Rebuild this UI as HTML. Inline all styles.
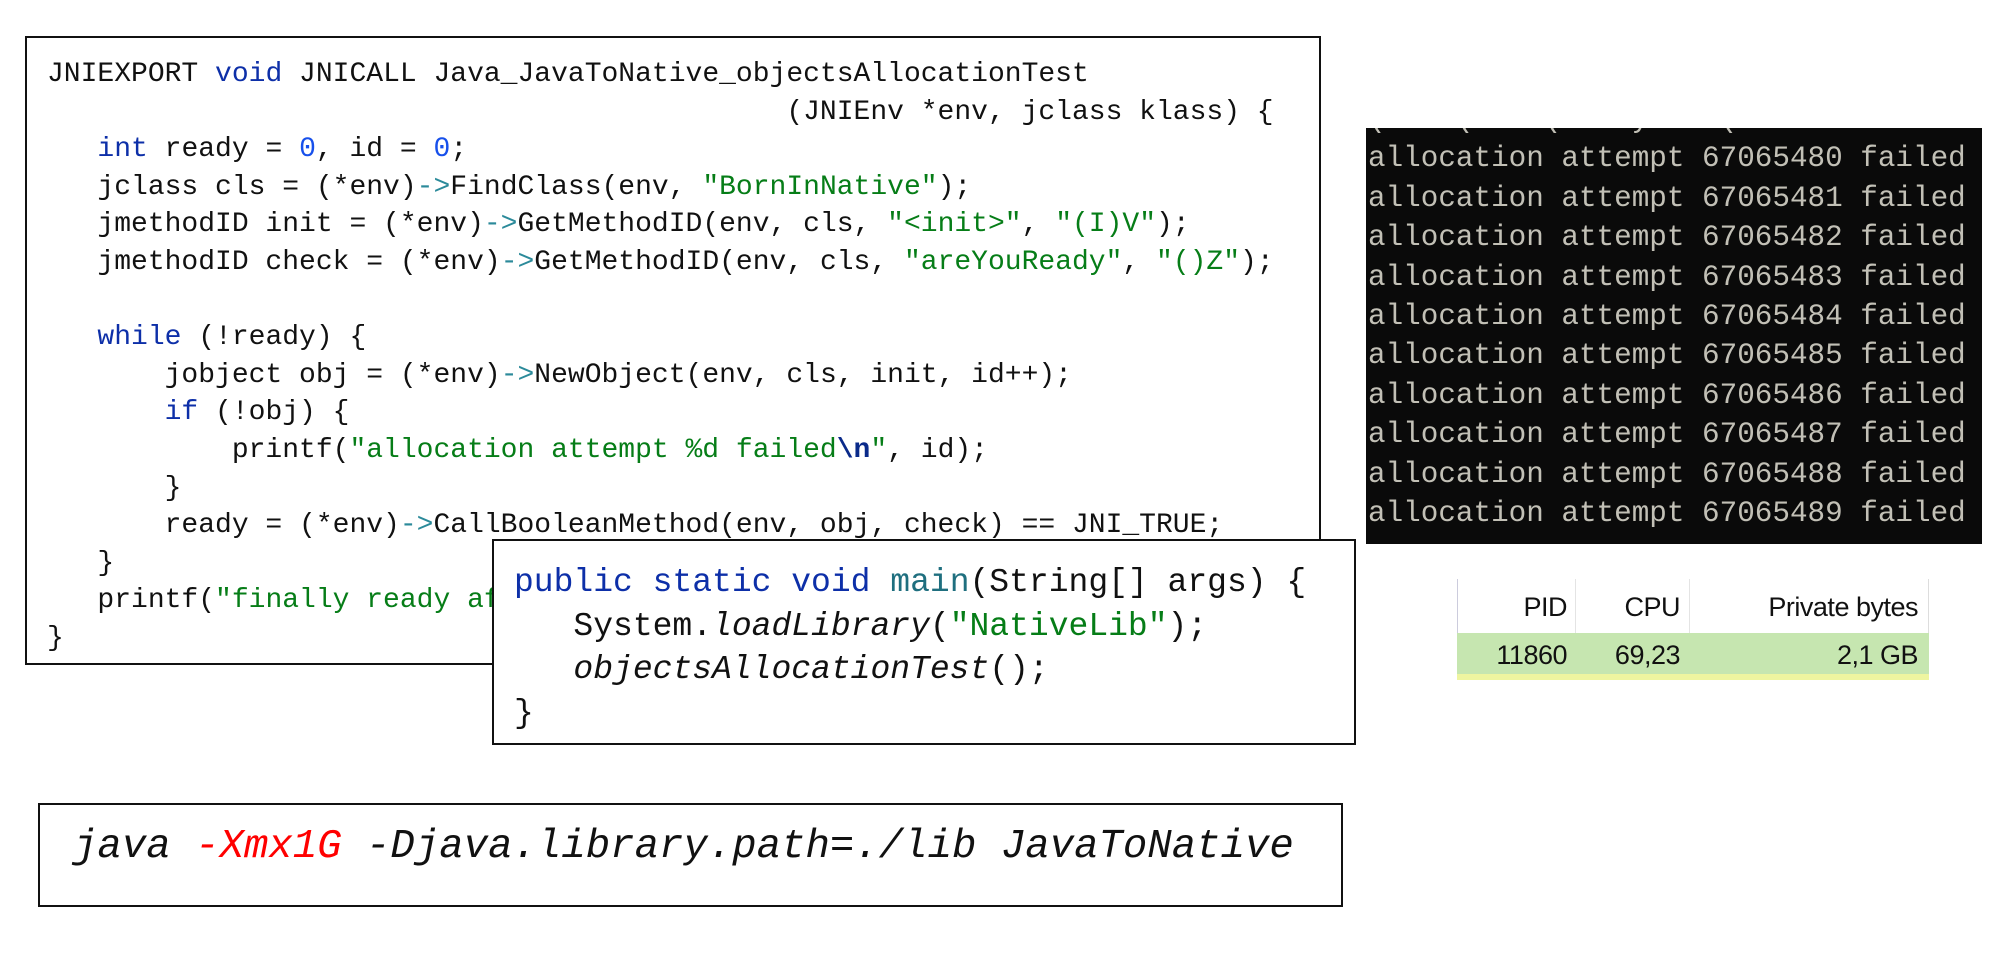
<!DOCTYPE html>
<html><head><meta charset="utf-8"><style>
body{margin:0;width:1996px;height:958px;background:#fff;position:relative;overflow:hidden}
.box{position:absolute;border:2px solid #111;background:#fff;box-sizing:border-box}
pre{margin:0;position:absolute;font-family:"Liberation Mono",monospace;color:#111;white-space:pre}
.k{color:#0d2fa8}.n{color:#1750eb}.s{color:#067d17}.a{color:#2b8a9a}.m{color:#1f6f7f}.b{color:#0a2a8a;font-weight:bold}
i{font-style:italic}
.th{position:absolute;font-family:"Liberation Sans",sans-serif;font-size:27px;color:#111;text-align:right;letter-spacing:-0.5px}
</style></head><body>
<div class="box" style="left:25px;top:36px;width:1296px;height:629px"></div>
<pre style="left:47px;top:56px;font-size:28px;line-height:37.6px">JNIEXPORT <span class="k">void</span> JNICALL Java_JavaToNative_objectsAllocationTest
                                            (JNIEnv *env, jclass klass) {
   <span class="k">int</span> ready = <span class="n">0</span>, id = <span class="n">0</span>;
   jclass cls = (*env)<span class="a">-&gt;</span>FindClass(env, <span class="s">"BornInNative"</span>);
   jmethodID init = (*env)<span class="a">-&gt;</span>GetMethodID(env, cls, <span class="s">"&lt;init&gt;"</span>, <span class="s">"(I)V"</span>);
   jmethodID check = (*env)<span class="a">-&gt;</span>GetMethodID(env, cls, <span class="s">"areYouReady"</span>, <span class="s">"()Z"</span>);

   <span class="k">while</span> (!ready) {
       jobject obj = (*env)<span class="a">-&gt;</span>NewObject(env, cls, init, id++);
       <span class="k">if</span> (!obj) {
           printf(<span class="s">"allocation attempt %d failed<span class="b">\n</span>"</span>, id);
       }
       ready = (*env)<span class="a">-&gt;</span>CallBooleanMethod(env, obj, check) == JNI_TRUE;
   }
   printf(<span class="s">"finally ready after %d attempts"</span>, id);
}</pre>
<div class="box" style="left:492px;top:539px;width:864px;height:206px"></div>
<pre style="left:514px;top:561px;font-size:33px;line-height:43.7px"><span class="k">public static void</span> <span class="m">main</span>(String[] args) {
   System.<i>loadLibrary</i>(<span class="s">"NativeLib"</span>);
   <i>objectsAllocationTest</i>();
}</pre>
<div class="box" style="left:38px;top:803px;width:1305px;height:104px"></div>
<pre style="left:73px;top:824px;font-size:40.7px;line-height:46px"><i>java <span style="color:#f00">-Xmx1G</span> -Djava.library.path=./lib JavaToNative</i></pre>
<div style="position:absolute;left:1366px;top:128px;width:616px;height:416px;background:#0a0a0a;overflow:hidden">
<pre style="left:2px;top:-28px;font-size:29.3px;line-height:39.4px;color:#c2c0b6">(    (    (    y    (
allocation attempt 67065480 failed
allocation attempt 67065481 failed
allocation attempt 67065482 failed
allocation attempt 67065483 failed
allocation attempt 67065484 failed
allocation attempt 67065485 failed
allocation attempt 67065486 failed
allocation attempt 67065487 failed
allocation attempt 67065488 failed
allocation attempt 67065489 failed</pre></div>
<div style="position:absolute;left:1457px;top:579px;width:470px;height:54px;background:#fff;border-left:1px solid #ccd;border-right:1px solid #ddd"></div>
<div style="position:absolute;left:1575px;top:579px;width:1px;height:54px;background:#e4e4e4"></div>
<div style="position:absolute;left:1689px;top:579px;width:1px;height:54px;background:#e4e4e4"></div>
<div style="position:absolute;left:1457px;top:633px;width:472px;height:41px;background:#c6e6b0"></div>
<div style="position:absolute;left:1457px;top:674px;width:472px;height:6px;background:#eef5a0"></div>
<div class="th" style="left:1457px;top:592px;width:110px">PID</div>
<div class="th" style="left:1576px;top:592px;width:104px">CPU</div>
<div class="th" style="left:1690px;top:592px;width:228px">Private bytes</div>
<div class="th" style="left:1457px;top:640px;width:110px">11860</div>
<div class="th" style="left:1576px;top:640px;width:104px">69,23</div>
<div class="th" style="left:1690px;top:640px;width:228px">2,1 GB</div>
</body></html>
